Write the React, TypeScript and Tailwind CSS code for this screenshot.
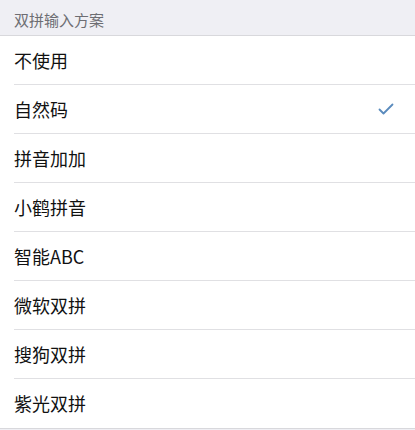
import React from "react";

const items = ["不使用", "自然码", "拼音加加", "小鹤拼音", "智能ABC", "微软双拼", "搜狗双拼", "紫光双拼"];

export default function App() {
  return (
    <div
      className="w-[415px] h-[430px] bg-[#efeff4] overflow-hidden"
      style={{ fontFamily: '"Noto Sans CJK SC", "Liberation Sans", sans-serif' }}
    >
      <div className="h-[36px] flex items-center pt-[5px] px-[14px] text-[15px] text-[#6d6d72] border-b border-[#d8d8dc]">
        双拼输入方案
      </div>
      <div className="bg-white border-b border-[#d8d8dc]">
        {items.map((t, i) => (
          <div key={t} className="flex h-[49px] pl-[14px]">
            <div
              className={
                "flex-1 flex items-center pr-[20px] text-[18px] text-[#111] " +
                (i < items.length - 1 ? "border-b border-[#e0e0e3]" : "")
              }
            >
              <span className="flex-1">{t}</span>
              {i === 1 && (
                <svg width="16" height="12" viewBox="0 0 16 12" className="mr-[1px]">
                  <path d="M1.5 6.5 L5.5 10.5 L14.5 1.5" fill="none" stroke="#5a8bbd" strokeWidth="1.8" strokeLinecap="round" strokeLinejoin="round" />
                </svg>
              )}
            </div>
          </div>
        ))}
      </div>
    </div>
  );
}
